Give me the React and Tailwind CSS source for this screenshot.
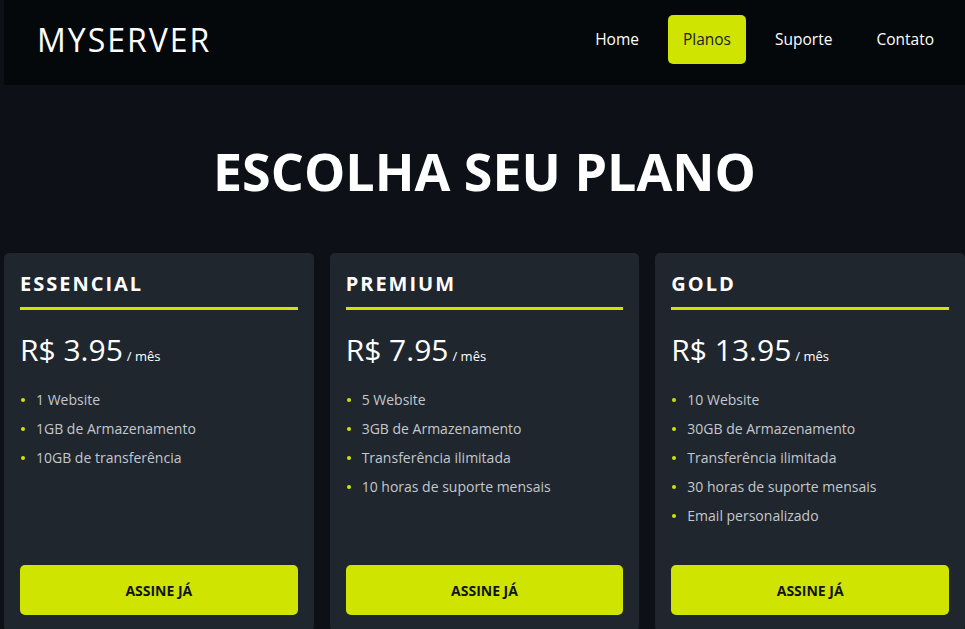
import React from 'react';

const plans = [
  {
    name: 'ESSENCIAL',
    price: 'R$ 3.95',
    features: ['1 Website', '1GB de Armazenamento', '10GB de transferência'],
  },
  {
    name: 'PREMIUM',
    price: 'R$ 7.95',
    features: ['5 Website', '3GB de Armazenamento', 'Transferência ilimitada', '10 horas de suporte mensais'],
  },
  {
    name: 'GOLD',
    price: 'R$ 13.95',
    features: [
      '10 Website',
      '30GB de Armazenamento',
      'Transferência ilimitada',
      '30 horas de suporte mensais',
      'Email personalizado',
    ],
  },
];

const links = ['Home', 'Planos', 'Suporte', 'Contato'];

const App = () => {
  return (
    <div className="min-h-screen bg-[#0d1117] pl-1 font-['Open_Sans',sans-serif]">
      {/* Header */}
      <header className="flex items-center justify-between bg-[#05080b] pl-[33px] pr-[16px] pt-[15px] pb-[21px]">
        <h1 className="text-[32px] font-normal tracking-[2px] text-white leading-none">MYSERVER</h1>
        <nav className="flex items-center gap-[14px]">
          {links.map((l) => (
            <a
              key={l}
              href="#"
              className={
                l === 'Planos'
                  ? 'rounded-[5px] bg-[#cfe400] px-[15px] py-[12px] text-[15.5px] leading-[25px] text-[#1b1f14]'
                  : 'px-[15px] py-[12px] text-[15.5px] leading-[25px] text-white'
              }
            >
              {l}
            </a>
          ))}
        </nav>
      </header>

      {/* Title */}
      <section className="pt-[55px] pb-[51px] text-center">
        <h2 className="text-[52px] font-bold leading-[1.2] text-white">ESCOLHA SEU PLANO</h2>
      </section>

      {/* Plans */}
      <div className="grid grid-cols-3 gap-4">
        {plans.map((p) => (
          <div key={p.name} className="flex flex-col rounded-[5px] bg-[#20262d] px-4 pt-[17px] pb-4">
            <h3 className="border-b-[3px] border-[#cfe400] pb-[9px] text-[20px] font-bold leading-[28px] tracking-[2px] text-white">
              {p.name}
            </h3>
            <div className="mt-[20px] flex items-baseline text-white">
              <span className="text-[30px] leading-[40px]">{p.price}</span>
              <span className="ml-1 text-[13px]">/ mês</span>
            </div>
            <ul className="mt-[19px] mb-[39px] flex flex-1 flex-col gap-2">
              {p.features.map((f) => (
                <li key={f} className="flex items-center text-[14px] leading-[21px] text-[#c3c8ce]">
                  <span className="ml-[1px] mr-[11px] h-[4px] w-[4px] rounded-full bg-[#cfe400]" />
                  {f}
                </li>
              ))}
            </ul>
            <button className="h-[50px] w-full rounded-[5px] bg-[#cfe400] text-[14px] font-bold text-[#11151a]">
              ASSINE JÁ
            </button>
          </div>
        ))}
      </div>
    </div>
  );
};

export default App;
